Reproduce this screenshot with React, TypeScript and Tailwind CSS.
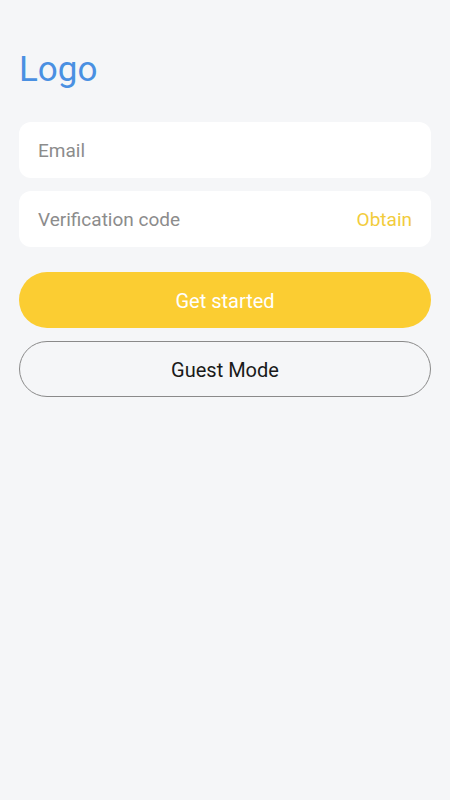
import React from "react";

export default function App() {
  return (
    <div className="min-h-[800px] w-full bg-[#f5f6f8] px-[19px] font-['Roboto',sans-serif]">
      <div className="pt-[49px] text-[35px] leading-[42px] text-[#4a90e2]">Logo</div>
      <div className="mt-[31px] flex flex-col gap-[13px]">
        <div className="flex h-[56px] items-center rounded-[12px] bg-white px-[19px] pt-[3px] text-[19px] text-[#8c8c8c]">
          Email
        </div>
        <div className="flex h-[56px] items-center justify-between rounded-[12px] bg-white px-[19px] pt-[3px] text-[19px]">
          <span className="text-[#8c8c8c]">Verification code</span>
          <span className="text-[#f2cc3c]">Obtain</span>
        </div>
      </div>
      <div className="mt-[25px] flex flex-col gap-[13px]">
        <button className="flex h-[56px] w-full items-center justify-center rounded-full bg-[#fbcd32] pt-[2px] text-[20px] text-white">
          Get started
        </button>
        <button className="flex h-[56px] w-full items-center justify-center rounded-full border border-[#8a8a8a] bg-transparent pt-[2px] text-[20px] text-[#1a1a1a]">
          Guest Mode
        </button>
      </div>
    </div>
  );
}
